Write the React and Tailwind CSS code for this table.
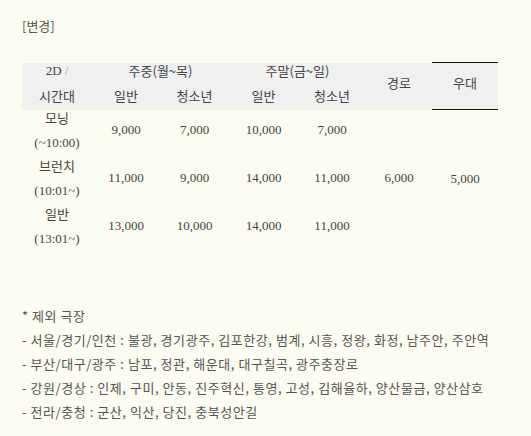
import React from "react";

const KR = "font-['Noto_Sans_CJK_KR',sans-serif]";
const SERIF = "font-['Liberation_Serif','Noto_Sans_CJK_KR',serif]";

function Num({ children, className = "" }) {
  return (
    <div className={`flex items-center justify-center pb-2 text-[13px] ${SERIF} ${className}`}>
      {children}
    </div>
  );
}

function Label({ top, bottom, row }) {
  return (
    <div className={`flex flex-col items-center justify-center pb-2 ${row}`}>
      <span className={`text-[13px] leading-[25px] ${KR}`}>{top}</span>
      <span className={`text-[13px] leading-[25px] ${SERIF}`}>{bottom}</span>
    </div>
  );
}

export default function App() {
  const cols = "grid grid-cols-[70px_68px_69px_69px_68px_66px_66px] w-[476px]";
  const notes = [
    "* 제외 극장",
    "- 서울/경기/인천 : 불광, 경기광주, 김포한강, 범계, 시흥, 정왕, 화정, 남주안, 주안역",
    "- 부산/대구/광주 : 남포, 정관, 해운대, 대구칠곡, 광주충장로",
    "- 강원/경상 : 인제, 구미, 안동, 진주혁신, 통영, 고성, 김해율하, 양산물금, 양산삼호",
    "- 전라/충청 : 군산, 익산, 당진, 충북성안길",
  ];
  return (
    <div className="min-h-[436px] w-[531px] bg-[#fdfcf2] pl-[22px] text-[#444]">
      <div className={`pt-[16px] text-[13px] leading-[20px] text-[#555] ${KR}`}>[변경]</div>

      {/* header */}
      <div className={`${cols} mt-[27px] grid-rows-[23px_24px] bg-[#f0f0f0]`}>
        <div className={`col-start-1 row-start-1 flex items-center justify-center pb-2 text-[13px] ${SERIF}`}>
          2D <span className="ml-[3px] text-[#999]">/</span>
        </div>
        <div className={`col-start-2 col-span-2 row-start-1 flex items-center justify-center pb-2 text-[13px] ${KR}`}>
          주중(월~목)
        </div>
        <div className={`col-start-4 col-span-2 row-start-1 flex items-center justify-center pb-2 text-[13px] ${KR}`}>
          주말(금~일)
        </div>
        <div className={`col-start-6 row-start-1 row-span-2 flex items-center justify-center pb-2 text-[13px] ${KR}`}>
          경로
        </div>
        <div className={`col-start-7 row-start-1 row-span-2 flex items-center justify-center pb-2 text-[13px] shadow-[0_-1px_0_#111,inset_0_-1px_0_#111] ${KR}`}>
          우대
        </div>
        <div className={`col-start-1 row-start-2 flex items-center justify-center pb-1 text-[13px] ${KR}`}>시간대</div>
        <div className={`col-start-2 row-start-2 flex items-center justify-center pb-1 text-[13px] ${KR}`}>일반</div>
        <div className={`col-start-3 row-start-2 flex items-center justify-center pb-1 text-[13px] ${KR}`}>청소년</div>
        <div className={`col-start-4 row-start-2 flex items-center justify-center pb-1 text-[13px] ${KR}`}>일반</div>
        <div className={`col-start-5 row-start-2 flex items-center justify-center pb-1 text-[13px] ${KR}`}>청소년</div>
      </div>

      {/* body */}
      <div className={`${cols} grid-rows-[48px_48px_48px]`}>
        <Label top="모닝" bottom="(~10:00)" row="col-start-1 row-start-1" />
        <Num className="col-start-2 row-start-1">9,000</Num>
        <Num className="col-start-3 row-start-1">7,000</Num>
        <Num className="col-start-4 row-start-1">10,000</Num>
        <Num className="col-start-5 row-start-1">7,000</Num>

        <Label top="브런치" bottom="(10:01~)" row="col-start-1 row-start-2" />
        <Num className="col-start-2 row-start-2">11,000</Num>
        <Num className="col-start-3 row-start-2">9,000</Num>
        <Num className="col-start-4 row-start-2">14,000</Num>
        <Num className="col-start-5 row-start-2">11,000</Num>

        <Label top="일반" bottom="(13:01~)" row="col-start-1 row-start-3" />
        <Num className="col-start-2 row-start-3">13,000</Num>
        <Num className="col-start-3 row-start-3">10,000</Num>
        <Num className="col-start-4 row-start-3">14,000</Num>
        <Num className="col-start-5 row-start-3">11,000</Num>

        <Num className="col-start-6 row-start-1 row-span-3">6,000</Num>
        <Num className="col-start-7 row-start-1 row-span-3 pt-[2px]">5,000</Num>
      </div>

      {/* notes */}
      <div className={`mt-[50px] text-[13px] leading-[24px] tracking-[0.55px] text-[#555] ${KR}`}>
        {notes.map((n) => (
          <div key={n}>{n}</div>
        ))}
      </div>
    </div>
  );
}
